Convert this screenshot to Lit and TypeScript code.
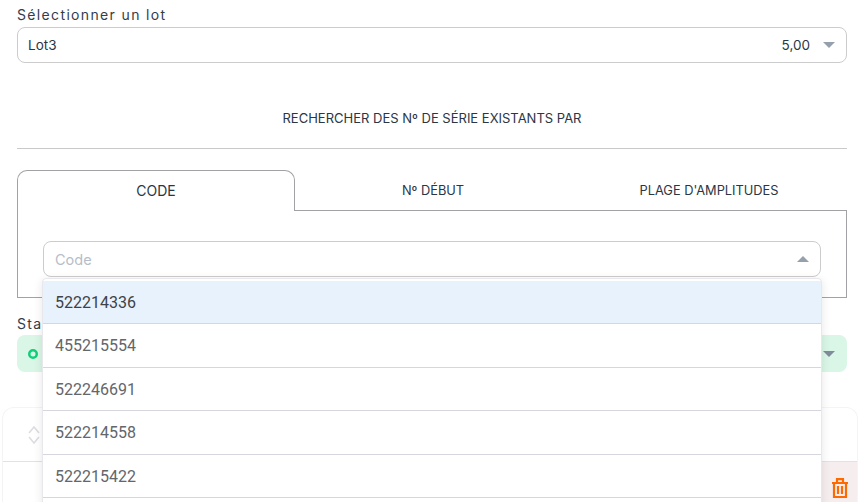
import { LitElement, html, css } from "lit";
import { customElement } from "lit/decorators.js";

const items = ["522214336", "455215554", "522246691", "522214558", "522215422"];

@customElement("app-root")
export class AppRoot extends LitElement {
  static styles = css`
    :host { display: block; width: 860px; height: 502px; overflow: hidden; position: relative; background: #fff;
      font-family: Inter, "Liberation Sans", sans-serif; color: #2b3645; }
    .top { padding: 0 13px 0 17px; }
    .label { font-size: 14px; line-height: 20px; letter-spacing: 1.35px; padding-top: 5px; height: 27px; box-sizing: border-box; color: #333d4b; }
    .select { height: 36px; box-sizing: border-box; border: 1px solid #ccc; border-radius: 8px; display: flex; align-items: center;
      padding: 0 11px 0 10px; font-size: 13.5px; }
    .select .grow { flex: 1; }
    .caret { width: 0; height: 0; border-left: 6px solid transparent; border-right: 6px solid transparent; border-top: 6px solid #95a0ac; margin-left: 13px; }
    .caret.up { border-top: none; border-bottom: 6px solid #95a0ac; }
    .title { margin-top: 38px; height: 48px; box-sizing: border-box; text-align: center; font-size: 13px; line-height: 35px; border-bottom: 1px solid #c9c9cc; }
    .tabs { margin-top: 21px; display: flex; height: 41px; }
    .tab { width: 278px; text-align: center; font-size: 12.8px; line-height: 41px; box-sizing: border-box; border-bottom: 1px solid #a2a2a6; }
    .tab.active { border: 1px solid #a2a2a6; border-bottom: none; border-radius: 10px 10px 0 0; font-size: 14px; line-height: 40px; }
    .tab.second { width: 276px; }
    .tab.third { width: 276px; }
    .panel { height: 87px; box-sizing: border-box; border: 1px solid #a2a2a6; border-top: none; padding: 30px 25px 0; }
    .input { height: 36px; box-sizing: border-box; border: 1px solid #ccc; border-radius: 8px; display: flex; align-items: center; justify-content: space-between;
      padding: 0 11px; font-size: 14.5px; color: #b5bec8; }
    .status-label { margin-top: 16px; height: 21px; font-size: 14px; line-height: 20px; letter-spacing: 1.35px; color: #333d4b; }
    .status { height: 37px; border-radius: 8px; background: #d9f6e6; display: flex; align-items: center; justify-content: space-between; padding: 0 12px 0 11px; }
    .dot { display: block; flex: none; }
    .status .caret { border-top-color: #7f8c99; }
    .card { margin: 35px 2px 0; height: 100px; border: 1px solid #f4f4f6; border-bottom: none; border-radius: 12px 12px 0 0; overflow: hidden; }
    .card-head { height: 53px; display: flex; align-items: center; padding-left: 24px; border-bottom: 1px solid #e2e2e6; }
    .card-row { height: 46px; display: flex; justify-content: flex-end; }
    .action { width: 120px; background: #f6eeee; display: flex; justify-content: flex-end; padding: 16px 9px 0 0; box-sizing: border-box; }
    .menu { position: absolute; left: 42px; top: 278px; width: 780px; box-sizing: border-box; background: #fff; border: 1px solid #e8e8ec; border-radius: 4px;
      box-shadow: 0 2px 10px rgba(0,0,0,.1); padding-top: 1.5px; height: 240px; }
    .item { height: 43.5px; box-sizing: border-box; border-bottom: 1px solid #d6d6de; padding-left: 12px; font-size: 16px; line-height: 43px; color: #63666b; font-family: Roboto, sans-serif; letter-spacing: 0; }
    .item.active { background: #e8f2fc; color: #3d4248; }
  `;

  render() {
    return html`
      <div class="top">
        <div class="label">Sélectionner un lot</div>
        <div class="select"><span class="grow">Lot3</span><span>5,00</span><span class="caret"></span></div>
        <div class="title">RECHERCHER DES Nº DE SÉRIE EXISTANTS PAR</div>
        <div class="tabs">
          <div class="tab active">CODE</div>
          <div class="tab second">Nº DÉBUT</div>
          <div class="tab third">PLAGE D'AMPLITUDES</div>
        </div>
        <div class="panel">
          <div class="input"><span>Code</span><span class="caret up"></span></div>
        </div>
        <div class="status-label">Statut</div>
        <div class="status">
          <svg class="dot" width="10" height="10" viewBox="0 0 10 10" fill="none" stroke="#0fcf78" stroke-width="2.5"><circle cx="5" cy="5" r="3.75"/></svg>
          <span class="caret"></span>
        </div>
      </div>
      <div class="card">
        <div class="card-head">
          <svg width="14" height="20" viewBox="0 0 14 20" fill="none" stroke="#dcdde2" stroke-width="1.6"><path d="M2 8l5-6 5 6M2 12l5 6 5-6"/></svg>
        </div>
        <div class="card-row">
          <div class="action">
            <svg width="16" height="20" viewBox="0 0 16 20" fill="none" stroke="#ff6a00" stroke-width="2.2"><path d="M0 5h16M5 5V1.2h6V5M2 5v14h12V5M6 8v8M10 8v8"/></svg>
          </div>
        </div>
      </div>
      <div class="menu">
        ${items.map((t, i) => html`<div class="item ${i === 0 ? "active" : ""}">${t}</div>`)}
      </div>
    `;
  }
}
